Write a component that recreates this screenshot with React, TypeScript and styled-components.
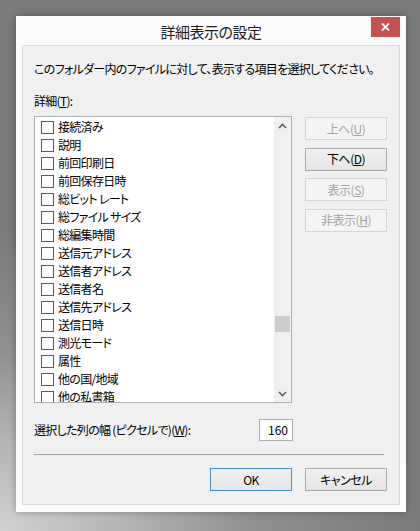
import React from "react";
import styled, { createGlobalStyle } from "styled-components";

const GlobalStyle = createGlobalStyle`
  html, body {
    margin: 0;
    padding: 0;
  }
  body {
    width: 420px;
    height: 531px;
    overflow: hidden;
    font-family: "Noto Sans CJK JP", "Noto Sans", sans-serif;
    font-feature-settings: "palt" 1;
    color: #000;
  }
`;

const Desktop = styled.div`
  width: 420px;
  height: 531px;
  box-sizing: border-box;
  padding: 16px 14px 19px 16px;
  background: radial-gradient(
    ellipse 420px 300px at 0% 100%,
    #d2d2d2 0%,
    #b4b4b4 30%,
    #909090 60%,
    #7a7a7a 100%
  ),
  #777;
`;

const Window = styled.div`
  width: 390px;
  height: 496px;
  box-sizing: border-box;
  padding: 0 6px 7px 6px;
  background: #fcfcfc;
  box-shadow: 0 0 7px rgba(0, 0, 0, 0.28);
  display: flex;
  flex-direction: column;
`;

const TitleBar = styled.div`
  height: 29px;
  display: grid;
  grid-template-columns: 1fr auto 1fr;
`;

const Title = styled.div`
  grid-column: 2;
  margin-top: 6px;
  font-size: 15px;
  line-height: 20px;
  letter-spacing: -0.5px;
  color: #1e1e1e;
`;

const CloseButton = styled.div`
  grid-column: 3;
  justify-self: end;
  margin-top: 1px;
  width: 29px;
  height: 20px;
  background: #c75050;
  display: flex;
  align-items: center;
  justify-content: center;
`;

const Client = styled.div`
  flex: 1;
  box-sizing: border-box;
  border: 1px solid #dadada;
  background: #f0f0f0;
  padding: 15px 12px 13px 11px;
  display: flex;
  flex-direction: column;
  font-size: 12px;
  letter-spacing: -0.7px;
`;

const Text = styled.div<{ $top: number }>`
  margin-top: ${({ $top }) => $top}px;
  line-height: 16px;
  white-space: nowrap;
`;

const MainRow = styled.div`
  margin-top: 7px;
  display: flex;
  gap: 13px;
`;

const ListBox = styled.div`
  width: 258px;
  height: 287px;
  box-sizing: border-box;
  border: 1px solid #adb0b6;
  background: #fff;
  display: flex;
  overflow: hidden;
`;

const Rows = styled.div`
  flex: 1;
  padding-top: 1px;
  overflow: hidden;
`;

const Row = styled.div`
  height: 18px;
  display: flex;
  align-items: center;
  padding-left: 6px;
  gap: 4px;
  line-height: 18px;
  white-space: nowrap;
`;

const CheckBox = styled.span`
  width: 13px;
  height: 13px;
  box-sizing: border-box;
  border: 1px solid #5a5a5a;
  background: #fff;
  flex-shrink: 0;
`;

const ScrollBar = styled.div`
  width: 17px;
  background: #f0f0f0;
  display: flex;
  flex-direction: column;
`;

const ArrowButton = styled.div`
  height: 17px;
  display: flex;
  align-items: center;
  justify-content: center;
`;

const Track = styled.div`
  flex: 1;
`;

const Thumb = styled.div<{ $offset: number; $size: number }>`
  margin: ${({ $offset }) => $offset}px 1px 0 1px;
  height: ${({ $size }) => $size}px;
  background: #cdcdcd;
`;

const SideButtons = styled.div`
  margin-top: 1px;
  display: flex;
  flex-direction: column;
  gap: 7.5px;
`;

const Button = styled.button<{ $default?: boolean }>`
  width: 82px;
  height: 23px;
  box-sizing: border-box;
  padding: 0;
  font-family: inherit;
  font-feature-settings: "palt" 1;
  font-size: 12px;
  letter-spacing: -0.5px;
  line-height: 20px;
  color: #000;
  border: 1px solid ${({ $default }) => ($default ? "#3f8fd8" : "#acacac")};
  background: linear-gradient(#f0f0f0, #e5e5e5);

  &:disabled {
    color: #a3a3a3;
    border-color: #d5d5d5;
    background: #f4f4f4;
  }
`;

const WidthRow = styled.div`
  margin-top: 16px;
  width: 259px;
  height: 22px;
  display: flex;
  align-items: center;
  justify-content: space-between;
`;

const NumberBox = styled.div`
  width: 34px;
  height: 22px;
  box-sizing: border-box;
  border: 1px solid #abadb3;
  background: #fff;
  text-align: right;
  padding-right: 4px;
  line-height: 20px;
  letter-spacing: 0;
`;

const Separator = styled.div`
  margin-top: 13px;
  width: 350px;
  height: 1px;
  background: #a0a0a0;
`;

const Footer = styled.div`
  margin-top: 13px;
  display: flex;
  justify-content: flex-end;
  gap: 13px;
`;

const items = [
  "接続済み",
  "説明",
  "前回印刷日",
  "前回保存日時",
  "総ビット レート",
  "総ファイル サイズ",
  "総編集時間",
  "送信元アドレス",
  "送信者アドレス",
  "送信者名",
  "送信先アドレス",
  "送信日時",
  "測光モード",
  "属性",
  "他の国/地域",
  "他の私書箱",
];

function Chevron({ up }: { up?: boolean }) {
  return (
    <svg width="9" height="6" viewBox="0 0 9 6">
      <polyline
        points={up ? "1,5 4.5,1.5 8,5" : "1,1 4.5,4.5 8,1"}
        fill="none"
        stroke="#5f5f5f"
        strokeWidth="1.6"
      />
    </svg>
  );
}

export default function App() {
  return (
    <>
      <GlobalStyle />
      <Desktop>
        <Window>
          <TitleBar>
            <Title>詳細表示の設定</Title>
            <CloseButton>
              <svg width="9" height="8" viewBox="0 0 9 8">
                <path d="M1 0.5 L8 7.5 M8 0.5 L1 7.5" stroke="#fff" strokeWidth="1.8" />
              </svg>
            </CloseButton>
          </TitleBar>
          <Client>
            <Text $top={0}>
              このフォルダー内のファイルに対して、表示する項目を選択してください。
            </Text>
            <Text $top={16}>
              詳細(<u>T</u>):
            </Text>
            <MainRow>
              <ListBox>
                <Rows>
                  {items.map((item) => (
                    <Row key={item}>
                      <CheckBox />
                      <span>{item}</span>
                    </Row>
                  ))}
                </Rows>
                <ScrollBar>
                  <ArrowButton>
                    <Chevron up />
                  </ArrowButton>
                  <Track>
                    <Thumb $offset={182} $size={16} />
                  </Track>
                  <ArrowButton>
                    <Chevron />
                  </ArrowButton>
                </ScrollBar>
              </ListBox>
              <SideButtons>
                <Button disabled>
                  上へ(<u>U</u>)
                </Button>
                <Button>
                  下へ(<u>D</u>)
                </Button>
                <Button disabled>
                  表示(<u>S</u>)
                </Button>
                <Button disabled>
                  非表示(<u>H</u>)
                </Button>
              </SideButtons>
            </MainRow>
            <WidthRow>
              <Text $top={0}>
                選択した列の幅 (ピクセルで)(<u>W</u>):
              </Text>
              <NumberBox>160</NumberBox>
            </WidthRow>
            <Separator />
            <Footer>
              <Button $default>OK</Button>
              <Button>キャンセル</Button>
            </Footer>
          </Client>
        </Window>
      </Desktop>
    </>
  );
}
